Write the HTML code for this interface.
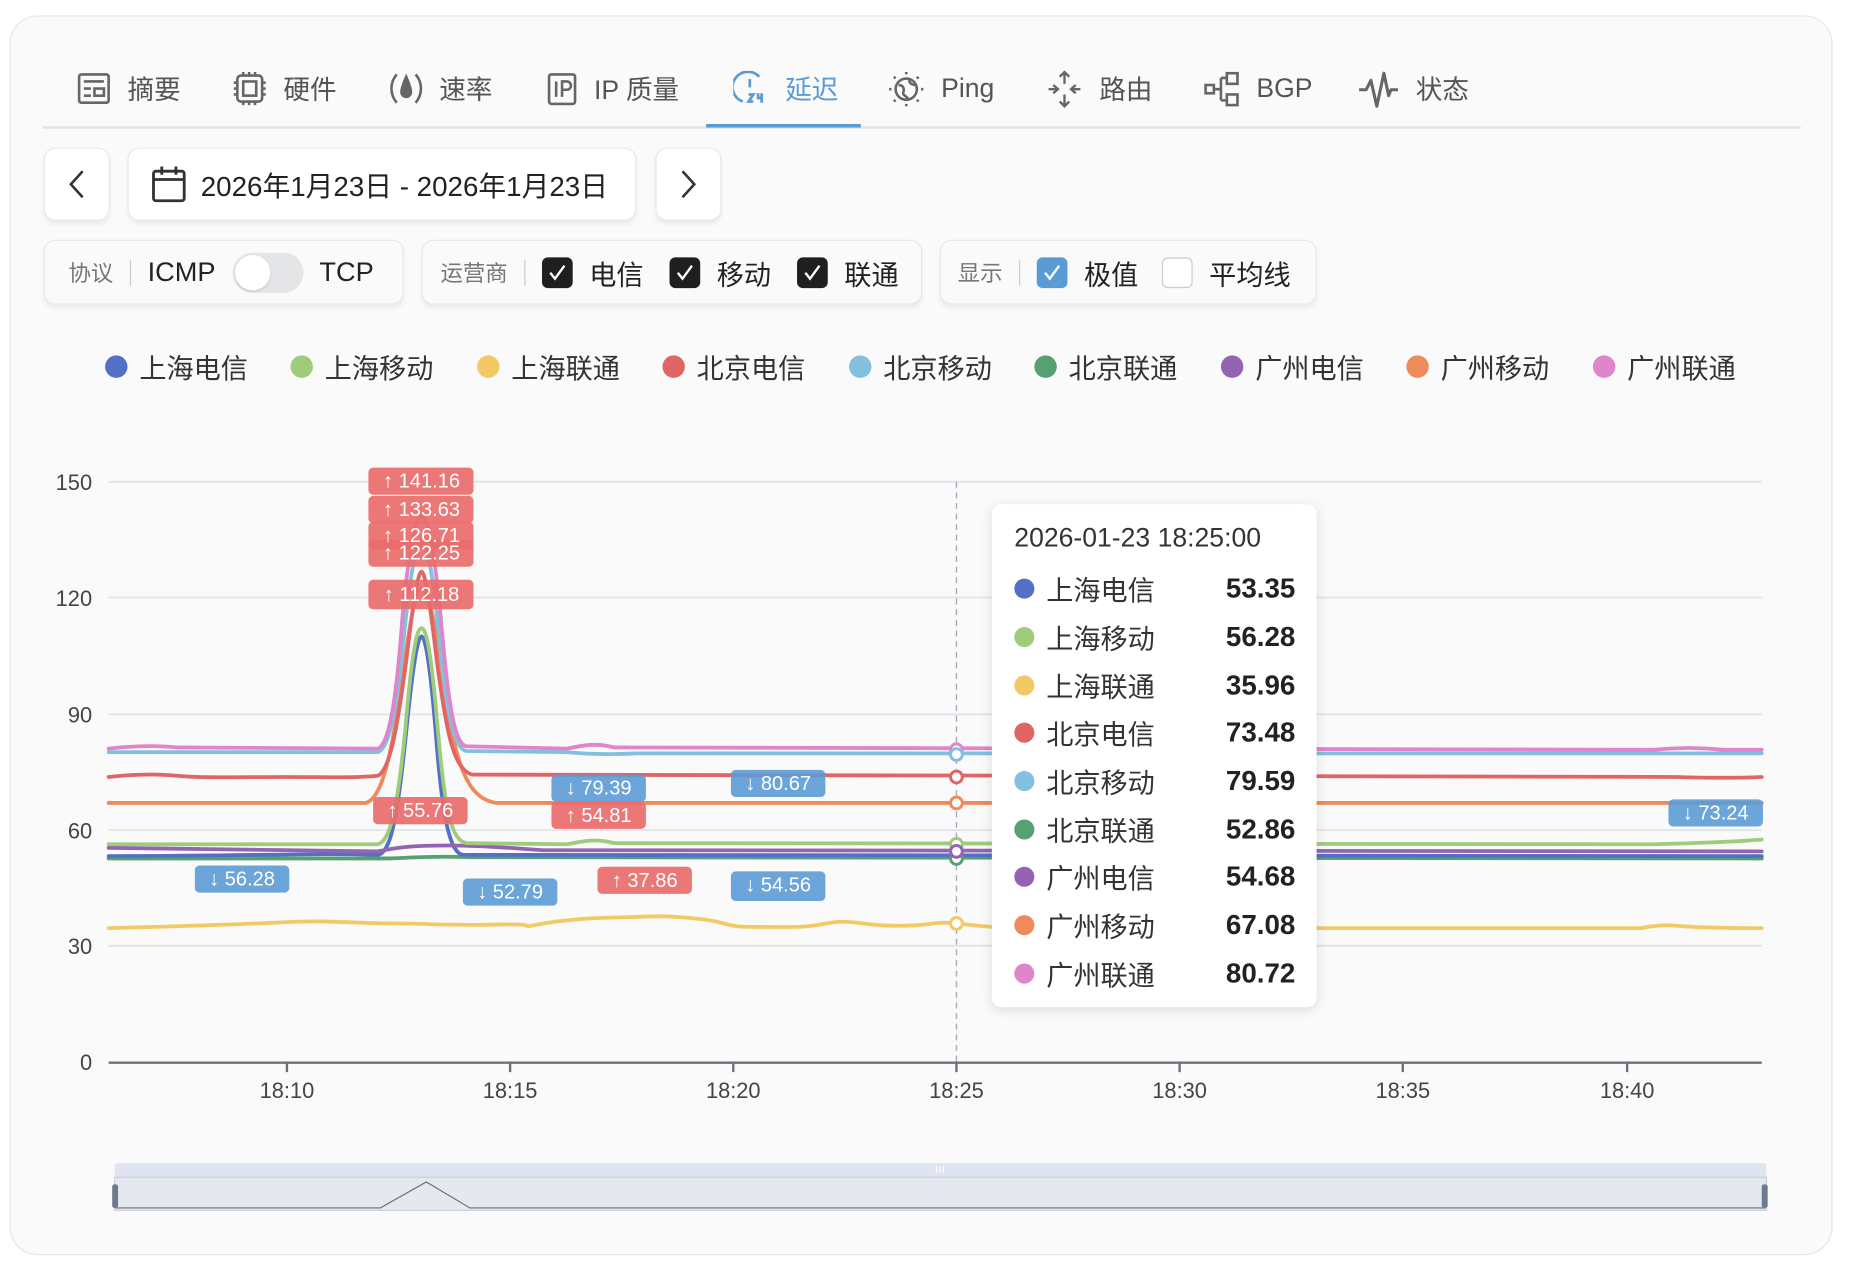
<!DOCTYPE html>
<html><head><meta charset="utf-8"><style>
*{margin:0;padding:0;box-sizing:border-box}
html,body{width:1852px;height:1274px;overflow:hidden;background:#fff}
body{font-family:"Liberation Sans","Noto Sans CJK SC",sans-serif;color:#333}
#w{position:absolute;left:0;top:0;width:1560px;height:1080px;transform:scale(1.1808);transform-origin:0 0}
.card{position:absolute;left:8px;top:13px;width:1544px;height:1050px;border:1.5px solid #e6e6e6;border-radius:24px;background:#fafafa}
.tab{position:absolute;top:58px;height:34px;display:flex;align-items:center;font-size:22.5px;color:#555;white-space:nowrap}
.tab svg{margin-right:14px}
.hl{position:absolute;left:36px;top:107px;width:1489px;height:2px;background:#e3e3e3}
.ul{position:absolute;left:598px;top:105px;width:131px;height:3px;background:#5b9bd5}
.btn{position:absolute;top:125px;height:62px;background:#fff;border:1.5px solid #e8e8e8;border-radius:10px;box-shadow:0 3px 4px rgba(0,0,0,.06);display:flex;align-items:center;justify-content:center;font-size:23.5px;color:#222}
.box{position:absolute;top:203px;height:55px;background:#fafafa;border:1.5px solid #e8e8e8;border-radius:10px;box-shadow:0 3px 4px rgba(0,0,0,.06);display:flex;align-items:center;font-size:23px;color:#222;white-space:nowrap}
.lbl{font-size:19px;color:#777}
.sep{width:1px;height:22px;background:#ccc;margin:0 14px}
.cb{width:26px;height:26px;border-radius:5px;background:#1f1f1f;display:inline-flex;align-items:center;justify-content:center;margin-right:14px}
.leg{position:absolute;top:293px;font-size:23px;color:#333;display:flex;align-items:center;white-space:nowrap}
.leg i{display:inline-block;width:19px;height:19px;border-radius:50%;margin-right:10px}
.tip{position:absolute;left:840px;top:427px;width:275px;height:426px;background:#fff;border-radius:8px;box-shadow:0 2px 10px rgba(0,0,0,.12)}
.tip .t{position:absolute;left:19px;top:16px;font-size:22.5px;color:#333}
.row{position:absolute;left:19px;width:238px;height:30px;display:flex;align-items:center;font-size:23px;color:#333}
.row i{display:inline-block;width:17px;height:17px;border-radius:50%;margin-right:10px}
.row b{margin-left:auto;font-weight:bold;color:#222;font-size:23.5px}
</style></head><body><div id="w">
<div class="card"></div>

<div class="tab" style="left:65px"><svg width="29" height="28" viewBox="0 0 29 28" fill="none" stroke="#666" stroke-width="2.2"><rect x="2" y="2" width="25" height="24" rx="2"/><path d="M6 8h17M6 14h6M6 20h6M15 14h8v6h-8z"/></svg>摘要</div>
<div class="tab" style="left:197px"><svg width="29" height="30" viewBox="0 0 29 30" fill="none" stroke="#666" stroke-width="2.2"><rect x="4" y="4" width="21" height="22" rx="3"/><rect x="9" y="9" width="11" height="12"/><path d="M9 1v3M14 1v3M19 1v3M9 26v3M14 26v3M19 26v3M1 10h3M1 15h3M1 20h3M25 10h3M25 15h3M25 20h3"/></svg>硬件</div>
<div class="tab" style="left:330px"><svg width="28" height="30" viewBox="0 0 28 30" fill="none" stroke="#666" stroke-width="2.2"><path d="M6 3C0 10 0 20 6 27M22 3c6 7 6 17 0 24"/><path d="M14 5c-3 7-4 10-4 13a4 4 0 0 0 8 0c0-3-1-6-4-13z" fill="#666"/></svg>速率</div>
<div class="tab" style="left:463px"><svg width="26" height="29" viewBox="0 0 26 29" fill="none" stroke="#666" stroke-width="2.2"><rect x="2" y="2" width="22" height="25" rx="2"/><path d="M8 8v13M13 21V8h4a3 3 0 0 1 0 7h-4"/></svg>IP 质量</div>
<div class="tab" style="left:621px;color:#5b9bd5"><svg width="30" height="31" viewBox="0 0 30 31" fill="none" stroke="#5b9bd5" stroke-width="2.3"><path d="M22 5A13 13 0 1 0 8 26"/><path d="M14 7v7"/><path d="M13 20h4l-4 6h4M21 19v4h4M24 19v8"/></svg>延迟</div>
<div class="tab" style="left:752px"><svg width="31" height="31" viewBox="0 0 31 31" fill="none" stroke="#666" stroke-width="2.2"><circle cx="15.5" cy="15.5" r="9"/><path d="M9 12c4 0 5 3 4 6s3 3 4 6M18 8c0 3 3 4 6 4" /><path d="M15.5 1v2M15.5 28v2M1 15.5h2M28 15.5h2M5 5l1.5 1.5M24.5 24.5L26 26M5 26l1.5-1.5M24.5 6.5L26 5" stroke-dasharray="2 2"/></svg>Ping</div>
<div class="tab" style="left:886px"><svg width="31" height="33" viewBox="0 0 31 33" fill="none" stroke="#666" stroke-width="2"><path d="M15.5 2v10M11.5 6l4-4 4 4M15.5 31V21M11.5 27l4 4 4-4M2 16.5h8M6 13l4 3.5-4 3.5M29 16.5h-8M25 13l-4 3.5 4 3.5"/></svg>路由</div>
<div class="tab" style="left:1019px"><svg width="31" height="31" viewBox="0 0 31 31" fill="none" stroke="#666" stroke-width="2.2"><rect x="2" y="12" width="7" height="7"/><rect x="20" y="2" width="9" height="9"/><rect x="20" y="20" width="9" height="9"/><path d="M9 15.5h6M15 6v19M15 6h5M15 25h5"/></svg>BGP</div>
<div class="tab" style="left:1150px"><svg width="35" height="33" viewBox="0 0 35 33" fill="none" stroke="#666" stroke-width="2.6" stroke-linejoin="round"><path d="M1 17h6l4-8 5 22 6-28 4 19 2-5h6"/></svg>状态</div>
<div class="hl"></div><div class="ul"></div>

<div class="btn" style="left:37px;width:56px"><svg width="14" height="26" viewBox="0 0 14 26"><path d="M12 2L2 13l10 11" fill="none" stroke="#333" stroke-width="2.2"/></svg></div>
<div class="btn" style="left:108px;width:431px;justify-content:flex-start;padding-left:19px"><svg width="30" height="32" viewBox="0 0 30 32" fill="none" stroke="#333" stroke-width="2.4" style="margin-right:12px"><rect x="2" y="5" width="26" height="25" rx="2"/><path d="M2 12h26M9 1v7M21 1v7"/></svg>2026年1月23日 - 2026年1月23日</div>
<div class="btn" style="left:555px;width:56px"><svg width="14" height="26" viewBox="0 0 14 26"><path d="M2 2l10 11L2 24" fill="none" stroke="#333" stroke-width="2.2"/></svg></div>

<div class="box" style="left:37px;width:305px;padding-left:20px"><span class="lbl">协议</span><span class="sep"></span>ICMP<span style="display:inline-block;width:60px;height:34px;border-radius:17px;background:#e4e5e7;margin:0 14px;position:relative"><span style="position:absolute;left:2px;top:2px;width:30px;height:30px;border-radius:50%;background:#fff;box-shadow:0 1px 2px rgba(0,0,0,.15)"></span></span>TCP</div>
<div class="box" style="left:357px;width:424px;padding-left:15px"><span class="lbl">运营商</span><span class="sep"></span><span class="cb"><svg width="18" height="18" viewBox="0 0 18 18"><path d="M3 9l4 5 8-11" fill="none" stroke="#fff" stroke-width="2"/></svg></span>电信<span style="width:22px"></span><span class="cb"><svg width="18" height="18" viewBox="0 0 18 18"><path d="M3 9l4 5 8-11" fill="none" stroke="#fff" stroke-width="2"/></svg></span>移动<span style="width:22px"></span><span class="cb"><svg width="18" height="18" viewBox="0 0 18 18"><path d="M3 9l4 5 8-11" fill="none" stroke="#fff" stroke-width="2"/></svg></span>联通</div>
<div class="box" style="left:796px;width:319px;padding-left:14px"><span class="lbl">显示</span><span class="sep"></span><span class="cb" style="background:#5b9bd5"><svg width="18" height="18" viewBox="0 0 18 18"><path d="M3 9l4 5 8-11" fill="none" stroke="#fff" stroke-width="2"/></svg></span>极值<span style="width:20px"></span><span class="cb" style="background:#fff;border:1.5px solid #ccc"></span>平均线</div>

<div class="leg" style="left:89px"><i style="background:#5470c6"></i>上海电信</div>
<div class="leg" style="left:246px"><i style="background:#9fcc7b"></i>上海移动</div>
<div class="leg" style="left:404px"><i style="background:#f3c966"></i>上海联通</div>
<div class="leg" style="left:561px"><i style="background:#e06666"></i>北京电信</div>
<div class="leg" style="left:719px"><i style="background:#83bfdf"></i>北京移动</div>
<div class="leg" style="left:876px"><i style="background:#57a072"></i>北京联通</div>
<div class="leg" style="left:1034px"><i style="background:#9464b2"></i>广州电信</div>
<div class="leg" style="left:1191px"><i style="background:#ef8a5a"></i>广州移动</div>
<div class="leg" style="left:1349px"><i style="background:#de85cb"></i>广州联通</div>

<svg style="position:absolute;left:0;top:0" width="1560" height="1073" viewBox="0 0 1560 1073">
<g stroke="#dfe3ea" stroke-width="1.5"><path d="M92 408H1492M92 506H1492M92 605H1492M92 703H1492M92 801H1492"/></g>
<path d="M92 900H1492" stroke="#6e7079" stroke-width="2"/>
<g stroke="#6e7079" stroke-width="2"><path d="M243 900v8M432 900v8M621 900v8M810 900v8M999 900v8M1188 900v8M1378 900v8"/></g>
<g font-size="18.5" fill="#444" font-family="Liberation Sans,sans-serif" text-anchor="end"><text x="78" y="415">150</text><text x="78" y="513">120</text><text x="78" y="612">90</text><text x="78" y="710">60</text><text x="78" y="808">30</text><text x="78" y="906">0</text></g>
<g font-size="18.5" fill="#444" font-family="Liberation Sans,sans-serif" text-anchor="middle"><text x="243" y="930">18:10</text><text x="432" y="930">18:15</text><text x="621" y="930">18:20</text><text x="810" y="930">18:25</text><text x="999" y="930">18:30</text><text x="1188" y="930">18:35</text><text x="1378" y="930">18:40</text></g>
<path d="M810 408V900" stroke="#aab" stroke-width="1.2" stroke-dasharray="5 4"/>
<g fill="none" stroke-width="3.2" stroke-linejoin="round" stroke-linecap="round">
<path stroke="#f3c966" d="M92 786C130 785 200 783 240 781S300 782 330 782S380 784 420 783S440 786 450 784S480 778 520 777S560 775 590 778S610 785 640 785S680 786 700 782S730 784 760 784S790 780 810 782S840 786 880 786L1390 786C1400 784 1410 783 1420 784S1450 786 1492 786"/>
<path stroke="#57a072" d="M92 727L330 727C350 726 370 725 400 726L1492 727"/>
<path stroke="#5470c6" d="M92 725C200 725 280 722 320 724C330 722 336 700 344 620C350 560 354 539 357 539C360 539 364 560 369 620C375 700 382 722 392 724L1492 725"/>
<path stroke="#9464b2" d="M92 718C200 720 280 721 320 721C335 718 345 716 380 716S440 719 460 720L1492 721"/>
<path stroke="#9fcc7b" d="M92 715L320 715C330 712 336 690 343 620C349 550 353 532 357 532C361 532 365 550 371 620C377 690 383 712 395 714L480 715C495 712 505 710 520 714L1400 715C1440 714 1470 713 1492 711"/>
<path stroke="#ef8a5a" d="M92 680L310 680C322 676 330 650 340 580C348 520 352 499 357 499C362 499 368 520 376 580C386 650 396 676 420 680L1492 680"/>
<path stroke="#e06666" d="M92 658C110 656 130 655 150 657S200 658 240 658S300 659 320 657C330 652 336 620 344 560C350 510 354 484 357 484C360 484 364 510 370 560C378 620 384 652 400 656L1420 658C1450 659 1470 659 1492 658"/>
<path stroke="#83bfdf" d="M92 637L320 637C330 634 336 600 342 540C348 480 352 462 357 462C362 462 366 480 372 540C378 600 384 634 395 636L480 637C500 639 520 639 540 638L1492 638"/>
<path stroke="#de85cb" d="M92 634C110 632 130 631 150 633L320 634C330 630 336 590 341 520C347 460 352 437 357 437C362 437 367 460 373 520C379 590 384 630 395 632L480 634C495 631 505 629 520 633L1400 635C1420 633 1440 633 1460 635L1492 635"/>
</g>
<g fill="#fff" stroke-width="2.5"><circle cx="810" cy="635" r="5" stroke="#de85cb"/><circle cx="810" cy="639" r="5" stroke="#83bfdf"/><circle cx="810" cy="658" r="5" stroke="#e06666"/><circle cx="810" cy="680" r="5" stroke="#ef8a5a"/><circle cx="810" cy="715" r="5" stroke="#9fcc7b"/><circle cx="810" cy="727" r="5" stroke="#57a072"/><circle cx="810" cy="721" r="5" stroke="#9464b2"/><circle cx="810" cy="782" r="5" stroke="#f3c966"/></g>
<g font-size="17" fill="#fff" font-family="Liberation Sans,sans-serif" text-anchor="middle">
<g fill="#ea6b6b" fill-opacity=".92"><rect x="312" y="396" width="89" height="23" rx="4"/><rect x="312" y="420" width="89" height="23" rx="4"/><rect x="312" y="442" width="89" height="23" rx="4"/><rect x="312" y="457" width="89" height="23" rx="4"/><rect x="312" y="491" width="89" height="25" rx="4"/><rect x="316" y="675" width="80" height="23" rx="4"/><rect x="467" y="679" width="80" height="23" rx="4"/><rect x="506" y="734" width="80" height="23" rx="4"/></g>
<g fill="#5b9bd5" fill-opacity=".9"><rect x="165" y="733" width="80" height="23" rx="4"/><rect x="467" y="656" width="80" height="23" rx="4"/><rect x="619" y="652" width="80" height="23" rx="4"/><rect x="392" y="744" width="80" height="23" rx="4"/><rect x="619" y="738" width="80" height="25" rx="4"/><rect x="1413" y="677" width="80" height="23" rx="4"/></g>
<text x="357" y="413">↑ 141.16</text><text x="357" y="437">↑ 133.63</text><text x="357" y="459">↑ 126.71</text><text x="357" y="474">↑ 122.25</text><text x="357" y="509">↑ 112.18</text><text x="356" y="692">↑ 55.76</text><text x="507" y="696">↑ 54.81</text><text x="546" y="751">↑ 37.86</text>
<text x="205" y="750">↓ 56.28</text><text x="507" y="673">↓ 79.39</text><text x="659" y="669">↓ 80.67</text><text x="432" y="761">↓ 52.79</text><text x="659" y="755">↓ 54.56</text><text x="1453" y="694">↓ 73.24</text>
</g>
<rect x="97" y="985" width="1399" height="13" rx="3" fill="#dfe5f0"/>
<rect x="97" y="997" width="1399" height="28" fill="#e5e8ee" stroke="#c8cfdc" stroke-width="1"/>
<path d="M98 1023H322L361 1001L398 1023H1495" fill="none" stroke="#6e7079" stroke-width="1"/>
<rect x="95" y="1003" width="5" height="20" rx="2" fill="#6e7b8f"/><rect x="1492" y="1003" width="5" height="20" rx="2" fill="#6e7b8f"/>
<path d="M793 988v5M796 988v5M799 988v5" stroke="#fff" stroke-width="1"/>
</svg>

<div class="tip"><div class="t">2026-01-23 18:25:00</div>
<div class="row" style="top:56px"><i style="background:#5470c6"></i>上海电信<b>53.35</b></div>
<div class="row" style="top:97px"><i style="background:#9fcc7b"></i>上海移动<b>56.28</b></div>
<div class="row" style="top:138px"><i style="background:#f3c966"></i>上海联通<b>35.96</b></div>
<div class="row" style="top:178px"><i style="background:#e06666"></i>北京电信<b>73.48</b></div>
<div class="row" style="top:219px"><i style="background:#83bfdf"></i>北京移动<b>79.59</b></div>
<div class="row" style="top:260px"><i style="background:#57a072"></i>北京联通<b>52.86</b></div>
<div class="row" style="top:300px"><i style="background:#9464b2"></i>广州电信<b>54.68</b></div>
<div class="row" style="top:341px"><i style="background:#ef8a5a"></i>广州移动<b>67.08</b></div>
<div class="row" style="top:382px"><i style="background:#de85cb"></i>广州联通<b>80.72</b></div>
</div>
</div></body></html>
